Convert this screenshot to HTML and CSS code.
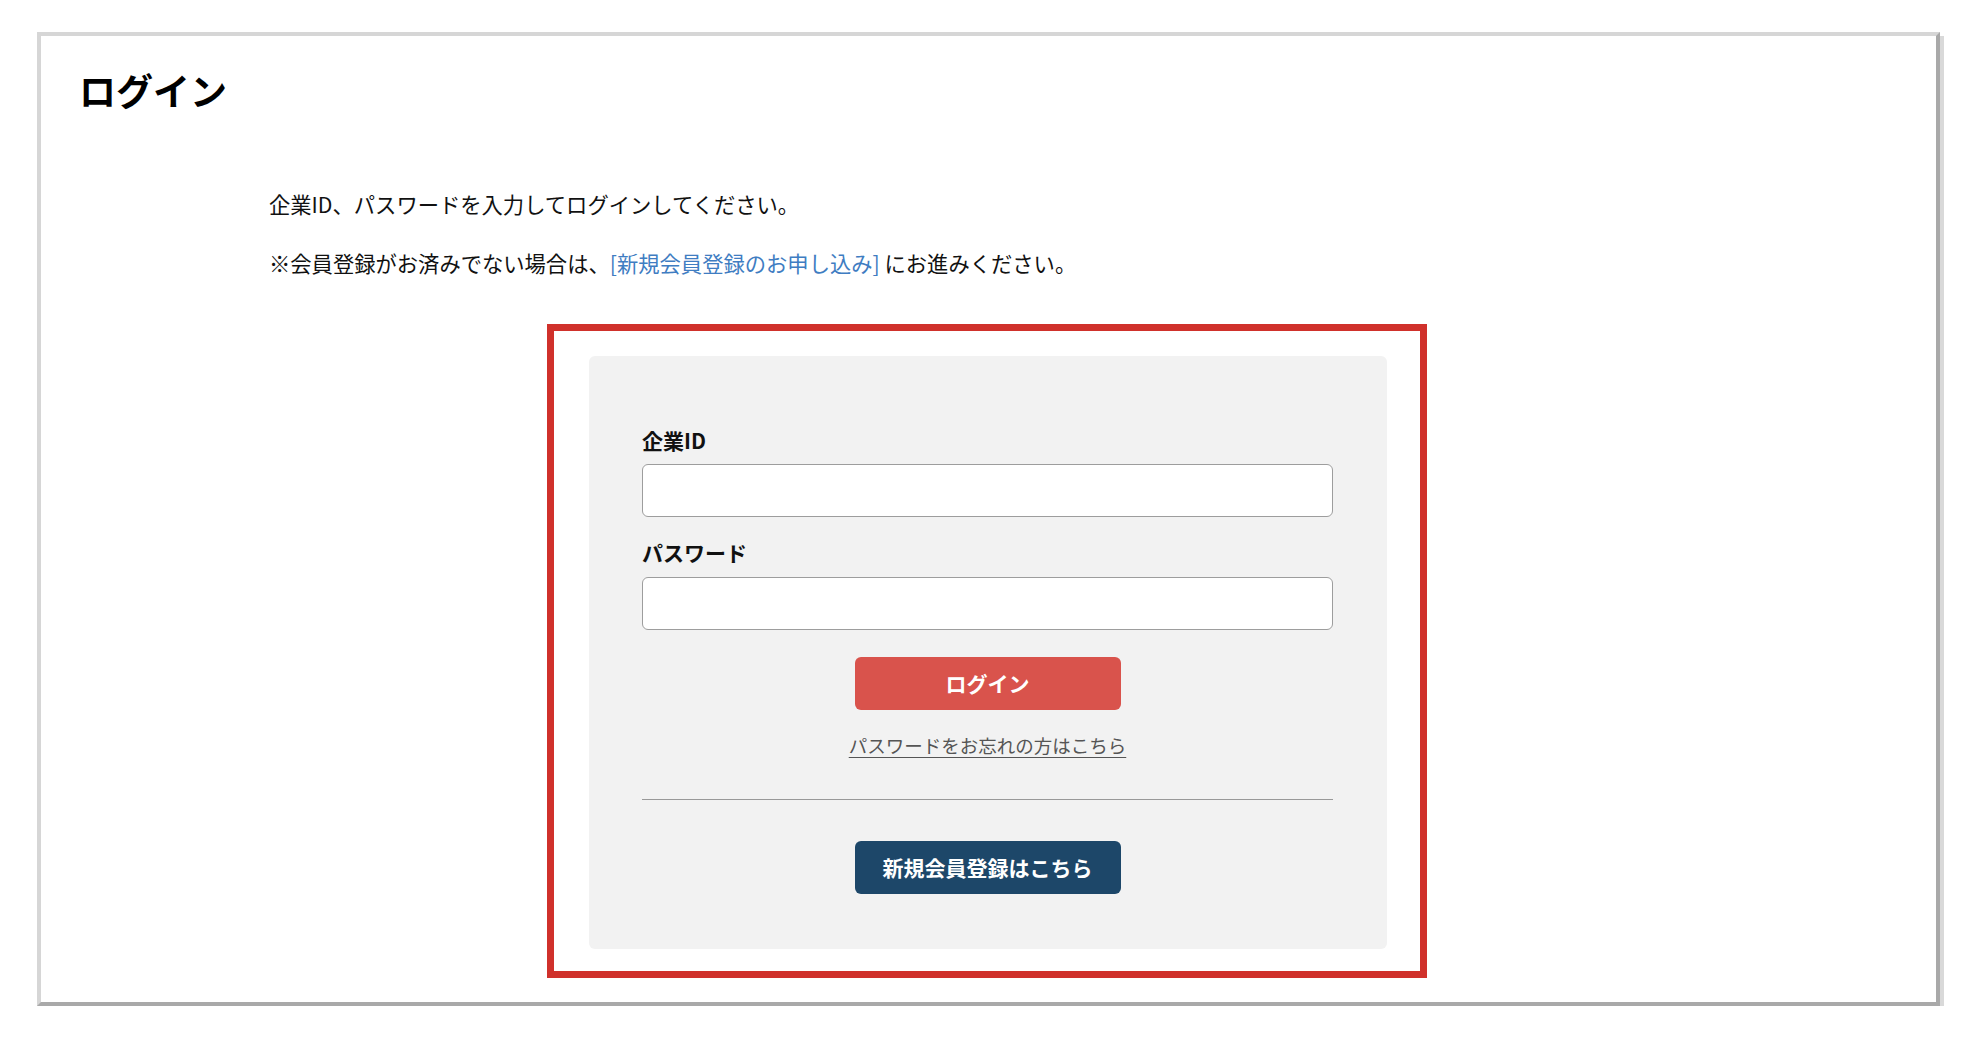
FILE: index.html
```html
<!DOCTYPE html>
<html lang="ja">
<head>
<meta charset="utf-8">
<title>ログイン</title>
<link rel="stylesheet" href="styles.css">
</head>
<body>
<div class="frame">
  <h1 class="title">ログイン</h1>
  <div class="content">
    <p class="intro">企業ID、パスワードを入力してログインしてください。</p>
    <p class="intro">※会員登録がお済みでない場合は、<a class="intro-link" href="#">[新規会員登録のお申し込み]</a> にお進みください。</p>
    <div class="highlight">
      <form class="card" onsubmit="return false;">
        <label class="field-label" for="cid">企業ID</label>
        <input class="field-input" id="cid" type="text">
        <label class="field-label field-label-next" for="pw">パスワード</label>
        <input class="field-input" id="pw" type="password">
        <button class="btn btn-login" type="submit">ログイン</button>
        <a class="forgot" href="#">パスワードをお忘れの方はこちら</a>
        <div class="divider"></div>
        <button class="btn btn-register" type="button">新規会員登録はこちら</button>
      </form>
    </div>
  </div>
</div>
</body>
</html>
```

FILE: styles.css
```css
* {
  box-sizing: border-box;
}

html, body {
  margin: 0;
  padding: 0;
  background: #ffffff;
}

body {
  font-family: "Noto Sans CJK JP", "Noto Sans", sans-serif;
  color: #111111;
}

.frame {
  margin: 32px 0 0 37px;
  width: 1903px;
  height: 974px;
  background: #ffffff;
  border-top: 4px solid #d6d6d6;
  border-left: 4px solid #d6d6d6;
  border-right: 4px solid #a9a9a9;
  border-bottom: 4px solid #a9a9a9;
  box-shadow: 4px 4px 0 #d9d9d9;
}

.title {
  margin: 0;
  padding: 28px 0 0 38px;
  font-size: 37px;
  font-weight: 700;
  line-height: 52px;
  color: #000000;
}

.content {
  margin: 69px 0 0 228px;
  width: 1440px;
}

.intro {
  margin: 0;
  font-size: 21.3px;
  line-height: 38px;
  color: #111111;
}

.intro + .intro {
  margin-top: 21px;
}

.intro-link {
  color: #3f7dc2;
  text-decoration: none;
}

.highlight {
  margin: 42px 0 0 278px;
  width: 880px;
  height: 654px;
  border: 7px solid #d0312b;
  padding: 25px 33px 22px 35px;
}

.card {
  display: flex;
  flex-direction: column;
  width: 798px;
  height: 593px;
  background: #f2f2f2;
  border-radius: 6px;
  padding: 69px 54px 55px 53px;
}

.field-label {
  display: block;
  font-size: 21px;
  font-weight: 700;
  line-height: 30px;
  color: #111111;
  margin-bottom: 9px;
}

.field-label-next {
  margin-top: 20px;
  margin-bottom: 10px;
}

.field-input {
  display: block;
  width: 100%;
  height: 53px;
  border: 1px solid #9d9d9d;
  border-radius: 6px;
  background: #ffffff;
  padding: 0 12px;
  font-family: inherit;
  font-size: 20px;
  outline: none;
}

.btn {
  display: block;
  align-self: center;
  width: 266px;
  height: 53px;
  border: none;
  border-radius: 6px;
  color: #ffffff;
  font-family: inherit;
  font-size: 21px;
  font-weight: 700;
  line-height: 53px;
  padding: 0;
  cursor: pointer;
}

.btn-login {
  margin-top: 27px;
  background: #d9534c;
}

.forgot {
  display: block;
  margin-top: 20px;
  text-align: center;
  font-size: 18.5px;
  line-height: 30px;
  color: #555555;
  text-decoration: underline;
  text-underline-offset: 4px;
}

.divider {
  margin-top: 39px;
  height: 1px;
  background: #999999;
}

.btn-register {
  margin-top: 41px;
  background: #1d4769;
}
```
